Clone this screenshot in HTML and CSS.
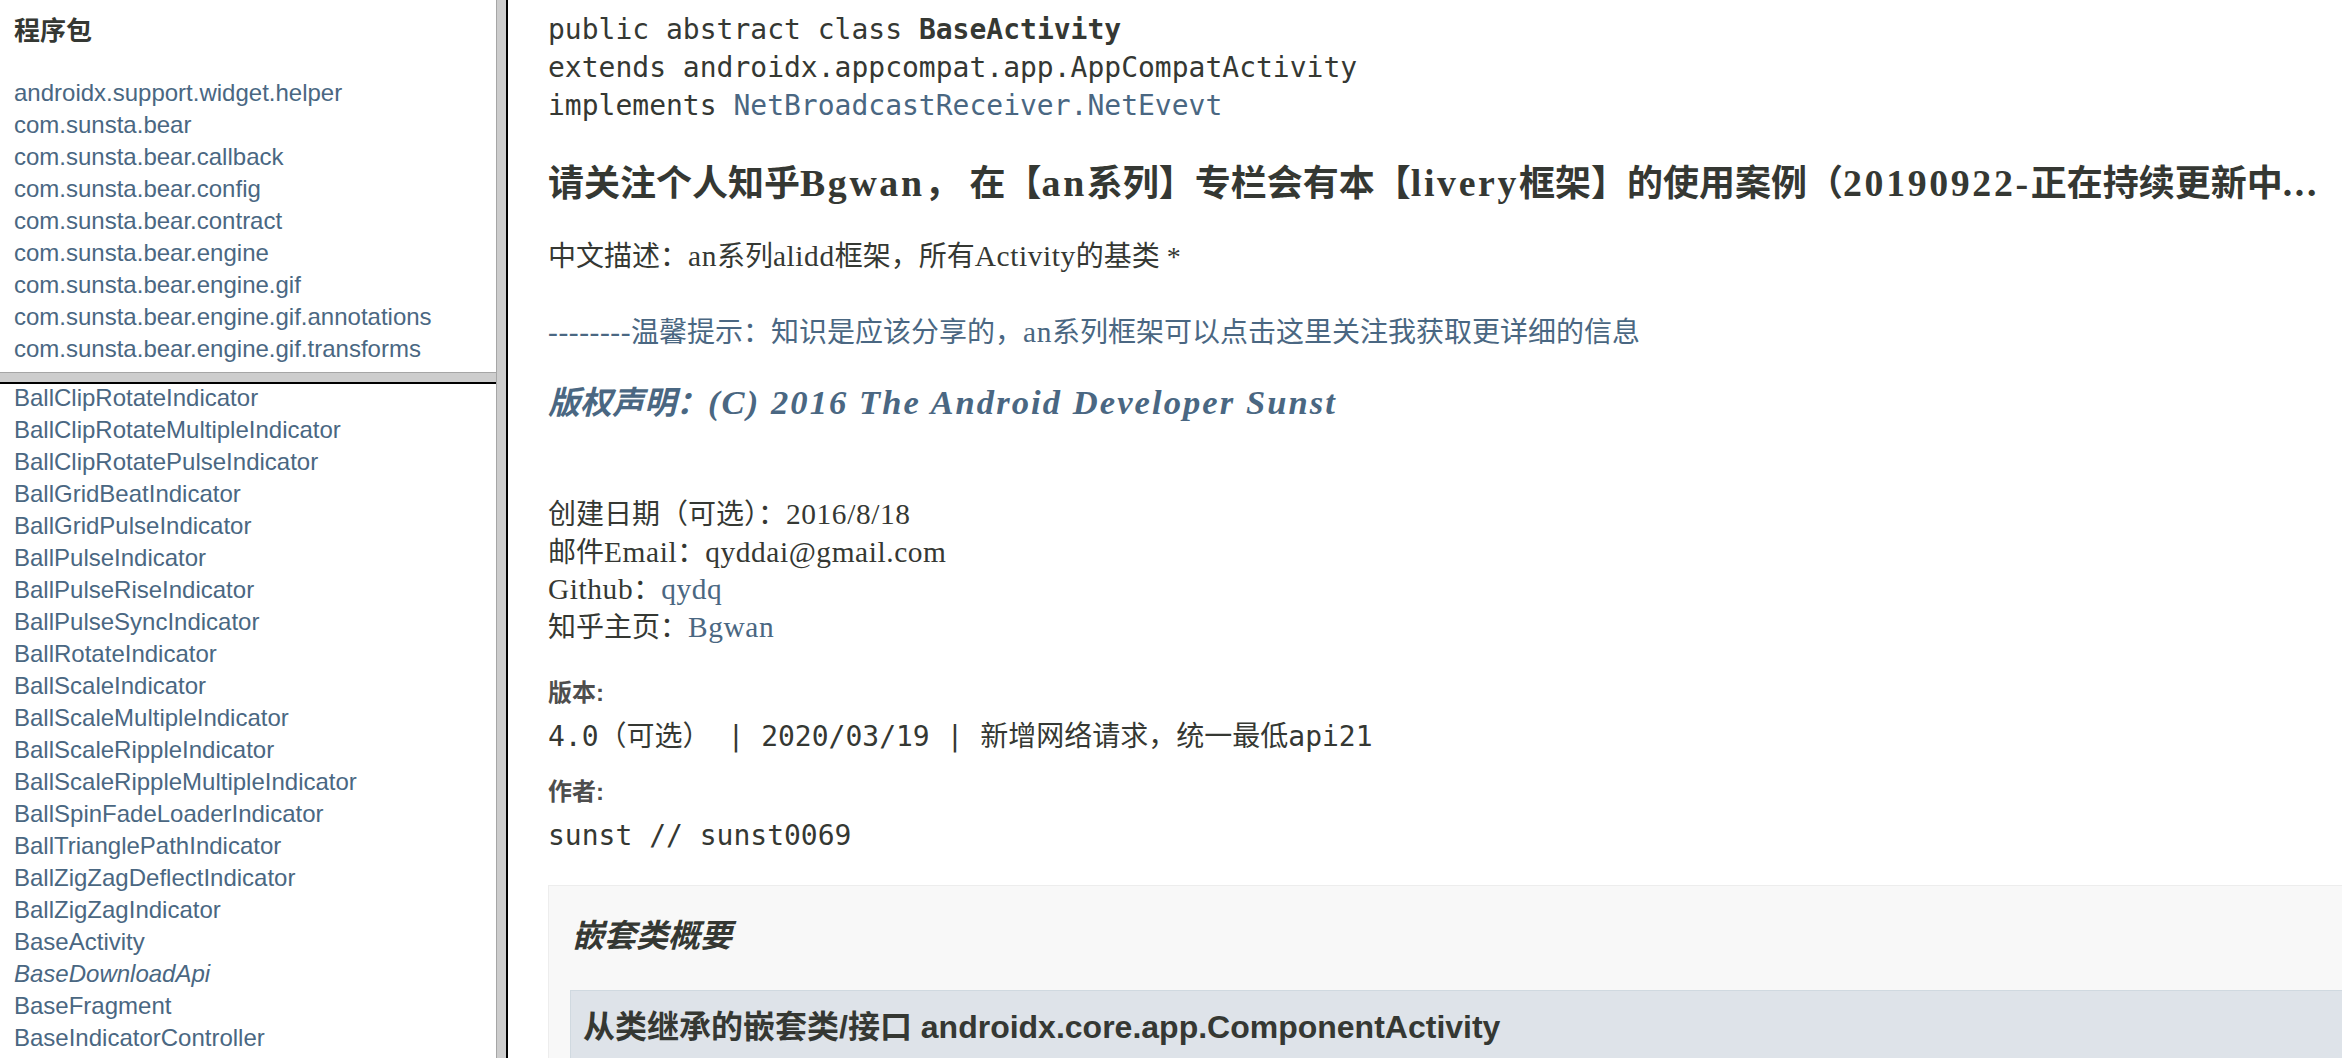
FILE: index.html
```html
<!DOCTYPE html>
<html lang="zh">
<head>
<meta charset="utf-8">
<title>BaseActivity</title>
<link rel="stylesheet" href="styles.css">
</head>
<body>
<div class="app">
  <div class="left">
    <div class="pkg-frame">
      <h2 class="pkg-title">程序包</h2>
      <ul class="list pkg-list">
        <li><a href="#">androidx.support.widget.helper</a></li>
        <li><a href="#">com.sunsta.bear</a></li>
        <li><a href="#">com.sunsta.bear.callback</a></li>
        <li><a href="#">com.sunsta.bear.config</a></li>
        <li><a href="#">com.sunsta.bear.contract</a></li>
        <li><a href="#">com.sunsta.bear.engine</a></li>
        <li><a href="#">com.sunsta.bear.engine.gif</a></li>
        <li><a href="#">com.sunsta.bear.engine.gif.annotations</a></li>
        <li><a href="#">com.sunsta.bear.engine.gif.transforms</a></li>
        <li><a href="#">com.sunsta.bear.engine.glide</a></li>
      </ul>
    </div>
    <div class="split-h"></div>
    <div class="cls-frame">
      <ul class="list cls-list">
        <li><a href="#">BallClipRotateIndicator</a></li>
        <li><a href="#">BallClipRotateMultipleIndicator</a></li>
        <li><a href="#">BallClipRotatePulseIndicator</a></li>
        <li><a href="#">BallGridBeatIndicator</a></li>
        <li><a href="#">BallGridPulseIndicator</a></li>
        <li><a href="#">BallPulseIndicator</a></li>
        <li><a href="#">BallPulseRiseIndicator</a></li>
        <li><a href="#">BallPulseSyncIndicator</a></li>
        <li><a href="#">BallRotateIndicator</a></li>
        <li><a href="#">BallScaleIndicator</a></li>
        <li><a href="#">BallScaleMultipleIndicator</a></li>
        <li><a href="#">BallScaleRippleIndicator</a></li>
        <li><a href="#">BallScaleRippleMultipleIndicator</a></li>
        <li><a href="#">BallSpinFadeLoaderIndicator</a></li>
        <li><a href="#">BallTrianglePathIndicator</a></li>
        <li><a href="#">BallZigZagDeflectIndicator</a></li>
        <li><a href="#">BallZigZagIndicator</a></li>
        <li><a href="#">BaseActivity</a></li>
        <li><a href="#"><i>BaseDownloadApi</i></a></li>
        <li><a href="#">BaseFragment</a></li>
        <li><a href="#">BaseIndicatorController</a></li>
        <li><a href="#">BaseListAdapter</a></li>
      </ul>
    </div>
  </div>
  <div class="split-v"></div>
  <div class="right">
    <pre class="sig">public abstract class <b>BaseActivity</b>
extends androidx.appcompat.app.AppCompatActivity
implements <a href="#">NetBroadcastReceiver.NetEvevt</a></pre>
    <h2 class="headline">请关注个人知乎<span class="l">Bgwan</span>， 在【<span class="l">an</span>系列】专栏会有本【<span class="l">livery</span>框架】的使用案例（<span class="l">20190922-</span>正在持续更新中<span class="l">...</span></h2>
    <p class="desc d1">中文描述：<span class="l">an</span>系列<span class="l">alidd</span>框架，所有<span class="l">Activity</span>的基类 *</p>
    <p class="desc d2"><a href="#"><span class="l">--------</span>温馨提示：知识是应该分享的，<span class="l">an</span>系列框架可以点击这里关注我获取更详细的信息</a></p>
    <h3 class="copyright"><a href="#">版权声明：<span class="l">(C) 2016 The Android Developer Sunst</span></a></h3>
    <p class="meta">创建日期（可选）：<span class="l">2016/8/18</span><br>邮件<span class="l">Email</span>：<span class="l">qyddai@gmail.com</span><br><span class="l">Github</span>：<a href="#"><span class="l">qydq</span></a><br>知乎主页：<a href="#"><span class="l">Bgwan</span></a></p>
    <dl class="tags">
      <dt>版本:</dt>
      <dd>4.0（可选） | 2020/03/19 | 新增网络请求，统一最低api21</dd>
      <dt>作者:</dt>
      <dd>sunst // sunst0069</dd>
    </dl>
    <div class="summary">
      <h3 class="summary-title">嵌套类概要</h3>
      <div class="inherited">从类继承的嵌套类/接口 androidx.core.app.ComponentActivity</div>
    </div>
  </div>
</div>
</body>
</html>
```
FILE: styles.css
```css
* { box-sizing: border-box; }
html, body { margin: 0; padding: 0; }
body {
  background: #ffffff;
  color: #353833;
  font-family: "Liberation Sans", Arial, "Noto Sans CJK SC", sans-serif;
  overflow: hidden;
}
a { color: #4A6782; text-decoration: none; }

.app {
  display: grid;
  grid-template-columns: 496px 12px 1fr;
  height: 1058px;
  overflow: hidden;
}

/* left column: two stacked frames */
.left {
  display: grid;
  grid-template-rows: 372px 12px 1fr;
  min-height: 0;
  overflow: hidden;
}
.pkg-frame, .cls-frame { overflow: hidden; min-height: 0; }

.split-v {
  background: #cdcdcd;
  border-left: 1px solid #a6a6a6;
  border-right: 2px solid #000;
}
.split-h {
  background: #cdcdcd;
  border-top: 1px solid #a6a6a6;
  border-bottom: 2px solid #000;
}

.pkg-title {
  margin: 0;
  padding: 15px 0 0 14px;
  font-size: 26px;
  line-height: 32px;
  font-weight: bold;
  color: #353833;
}
.list {
  list-style: none;
  margin: 0;
  padding: 0 0 0 14px;
  font-size: 24px;
  line-height: 32px;
  white-space: nowrap;
}
.pkg-list { margin-top: 30px; }
.cls-list { margin-top: -2px; }

/* right frame */
.right {
  padding: 0 0 0 40px;
  overflow: hidden;
  min-width: 0;
}
.sig {
  margin: 11px 0 0;
  font-family: "DejaVu Sans Mono", "Noto Sans CJK SC", monospace;
  font-size: 28px;
  line-height: 38px;
  color: #353833;
}
.headline, .desc, .copyright, .meta {
  font-family: "Liberation Serif", "Noto Sans CJK SC", serif;
}
.l { font-size: 1.05em; letter-spacing: 0.02em; }

.headline {
  margin: 36px 0 0;
  font-size: 36px;
  line-height: 44px;
  font-weight: bold;
  white-space: nowrap;
}
.headline .l { letter-spacing: 0.07em; }

.desc {
  margin: 0;
  font-size: 28px;
  line-height: 38px;
}
.d1 { margin-top: 31px; }
.d2 { margin-top: 37px; }

.copyright {
  margin: 30px 0 0;
  font-size: 32px;
  line-height: 40px;
  font-style: italic;
  font-weight: bold;
}
.copyright .l { font-size: 1.08em; letter-spacing: 0.06em; }

.meta {
  margin: 73px 0 0;
  font-size: 28px;
  line-height: 37.7px;
}

.tags { margin: 31px 0 0; }
.tags dt {
  font-size: 24px;
  line-height: 30px;
  font-weight: bold;
  color: #4E4E4E;
}
.tags dd {
  margin: 11px 0 22px;
  font-family: "DejaVu Sans Mono", "Noto Sans CJK SC", monospace;
  font-size: 28px;
  line-height: 36px;
}
.tags dd:last-child { margin-bottom: 0; }

.summary {
  margin-top: 31px;
  background: #f8f8f8;
  border: 1px solid #ededed;
  border-right: none;
  padding: 30px 0 0;
  height: 400px;
}
.summary-title {
  margin: 0;
  padding-left: 23px;
  font-size: 32px;
  line-height: 40px;
  font-style: italic;
  font-weight: bold;
}
.inherited {
  margin: 34px 0 0 21px;
  background: #dee3e9;
  border: 1px solid #d0d9e0;
  border-right: none;
  padding: 16px 12px 14px;
  font-size: 32px;
  line-height: 40px;
  font-weight: bold;
  white-space: nowrap;
}
```
